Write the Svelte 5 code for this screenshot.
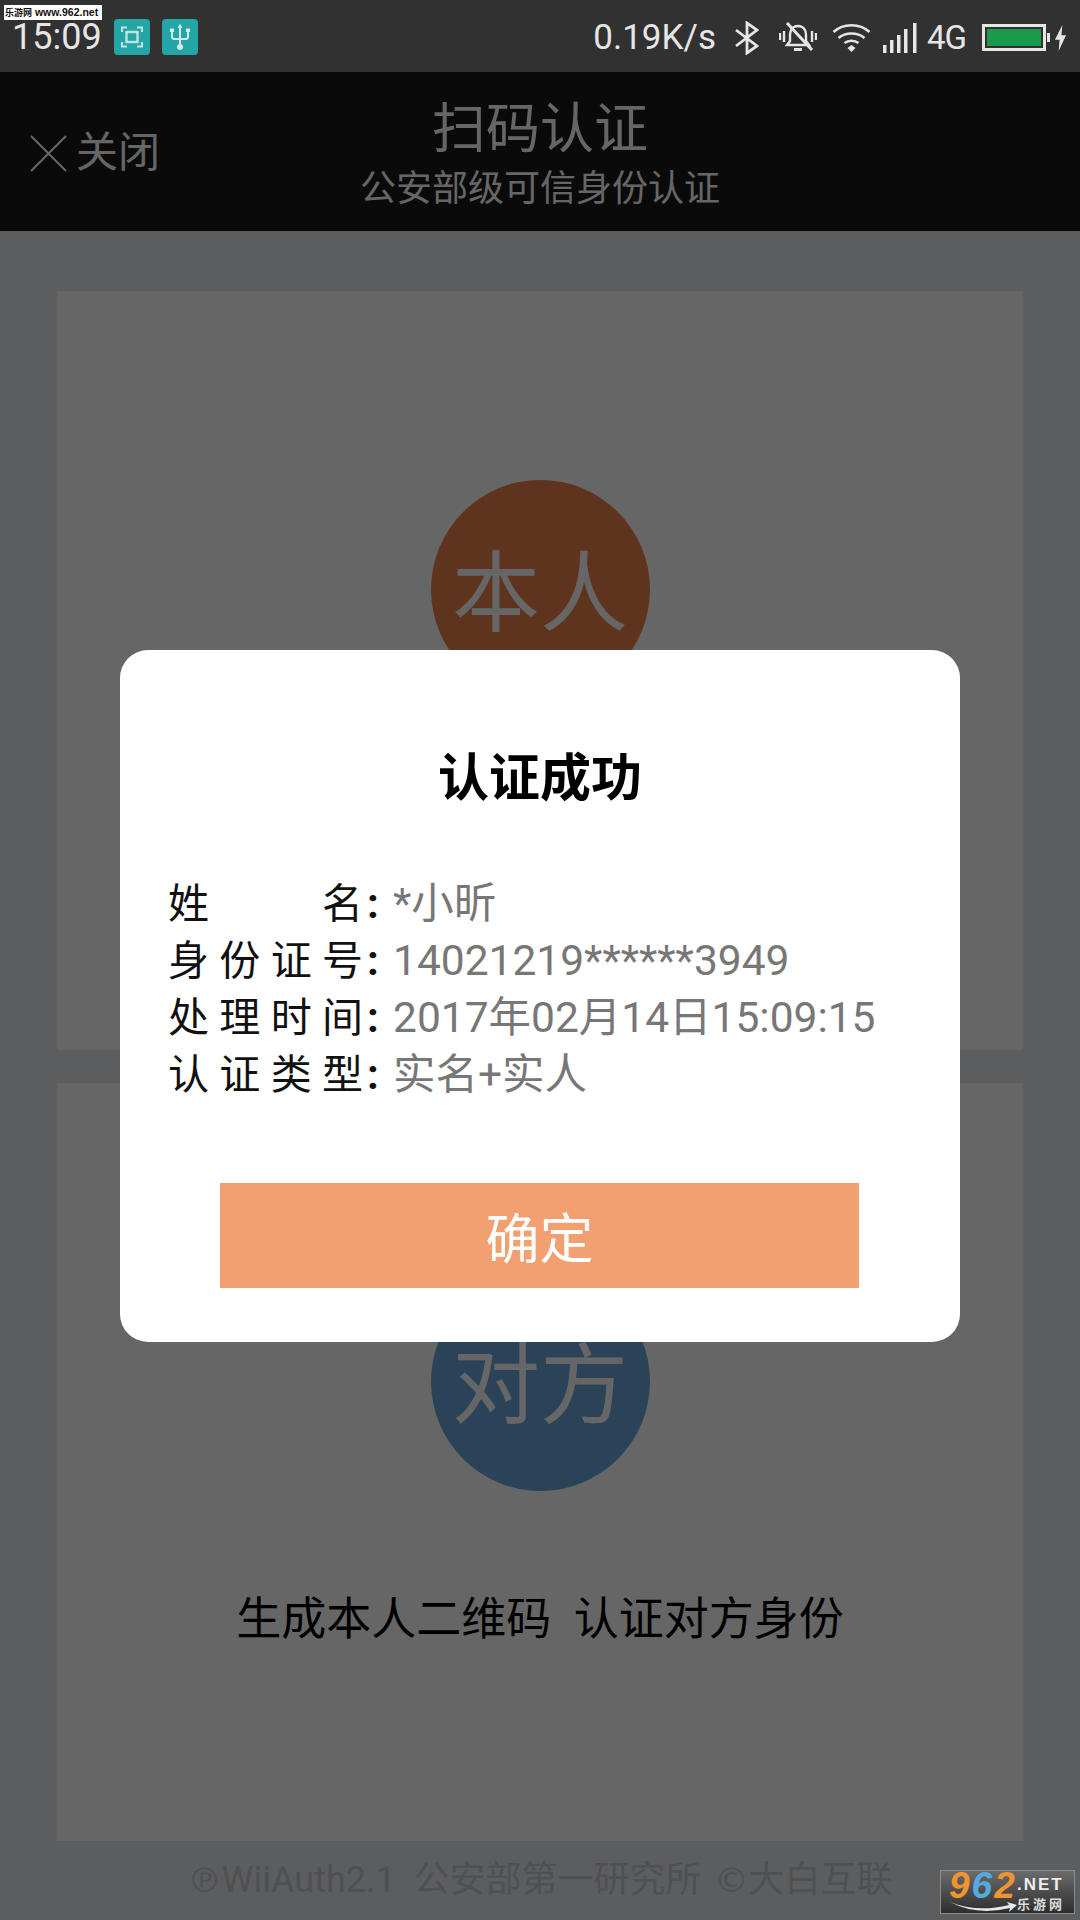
<script lang="ts">
  const details = [
    { label: ['姓', '名'], value: '*小昕' },
    { label: ['身', '份', '证', '号'], value: '14021219******3949' },
    { label: ['处', '理', '时', '间'], value: '2017年02月14日15:09:15' },
    { label: ['认', '证', '类', '型'], value: '实名+实人' }
  ];
</script>

<div class="phone">
  <div class="statusbar">
    <div class="status-left">
      <span class="clock">15:09</span>
      <span class="chip">
        <svg viewBox="0 0 36 36" width="36" height="36" fill="none" stroke="#bfe5e3" stroke-width="2">
          <path d="M8 13V8.500H13M23 8.500H28V13M8 23V27.500H13M23 27.500H28V23" />
          <rect x="12.500" y="13" width="11" height="10" stroke-width="2.400" />
        </svg>
      </span>
      <span class="chip">
        <svg viewBox="0 0 36 36" width="36" height="36" fill="none" stroke="#cfeae8" stroke-width="2">
          <path d="M18 8V28M10 12V17.500Q10 20 12.500 20H23.500Q26 20 26 17.500V12" />
          <path d="M18 4.500L15.500 9H20.500Z" fill="#cfeae8" stroke="none" />
          <circle cx="18" cy="28" r="3" fill="#cfeae8" stroke="none" />
          <rect x="8" y="9.500" width="4" height="3.500" fill="#cfeae8" stroke="none" />
          <rect x="24" y="9.500" width="4" height="3.500" fill="#cfeae8" stroke="none" />
        </svg>
      </span>
    </div>
    <div class="status-right">
      <span class="speed">0.19K/s</span>
      <svg class="bt" viewBox="0 0 24 34" width="24" height="34" fill="none" stroke="#e6e6e6" stroke-width="2.800">
        <path d="M1 9L22 25L12 32V2L22 9L1 25" />
      </svg>
      <svg class="mute" viewBox="0 0 38 32" width="38" height="32" fill="none" stroke="#e6e6e6" stroke-width="2.400">
        <path d="M19 4C13 4 11 9 11 13V19L8 23H30L27 19V13C27 9 25 4 19 4Z" />
        <path d="M15 27.500H23" stroke-width="3" />
        <path d="M1 11V18M5 9V20M33 9V20M37 11V18" />
        <path d="M8 1L33 28" stroke-width="3" />
      </svg>
      <svg class="wifi" viewBox="0 0 38 30" width="39" height="30" fill="none" stroke="#e6e6e6" stroke-width="2.600">
        <path d="M1 9C11 0 27 0 37 9M6 15C13 9 25 9 32 15M12 20C16 17 22 17 26 20" />
        <path d="M19 29L15 25L19 22L23 25Z" fill="#e6e6e6" stroke="none" />
      </svg>
      <svg class="signal" viewBox="0 0 34 30" width="34" height="30" fill="#e6e6e6">
        <rect x="0" y="22" width="3.500" height="8" />
        <rect x="7" y="17" width="3.500" height="13" />
        <rect x="14" y="12" width="3.500" height="18" />
        <rect x="21" y="6" width="3.500" height="24" />
        <rect x="30" y="0" width="3.500" height="30" />
      </svg>
      <span class="net">4G</span>
      <span class="battery"><span class="level"></span></span>
      <span class="nub"></span>
      <svg class="bolt" viewBox="0 0 14 28" width="13" height="28" fill="#e6e6e6">
        <path d="M9 0L1 16H6L5 28L13 11H8Z" />
      </svg>
    </div>
    <div class="site-tag"><span class="site-cn">乐游网</span> www.962.net</div>
  </div>

  <div class="content">
    <header class="topbar">
      <div class="close">
        <svg viewBox="0 0 36 36" width="37" height="37" fill="none" stroke="#fff" stroke-width="2">
          <path d="M1 1L35 35M35 1L1 35" />
        </svg>
        <span>关闭</span>
      </div>
      <div class="titles">
        <div class="title">扫码认证</div>
        <div class="subtitle">公安部级可信身份认证</div>
      </div>
    </header>

    <main class="cards">
      <section class="card">
        <div class="circle orange">本人</div>
      </section>
      <section class="card">
        <div class="circle blue">对方</div>
        <div class="card-text">生成本人二维码&nbsp;&nbsp;认证对方身份</div>
      </section>
    </main>

    <footer class="foot"><span class="sym">℗</span>WiiAuth2.1&nbsp;&nbsp;公安部第一研究所&nbsp;<span class="sym copy">©</span>大白互联</footer>

    <div class="scrim"></div>

    <div class="dialog">
      <h2>认证成功</h2>
      <div class="rows">
        {#each details as row}
          <div class="row">
            <span class="label">
              {#each row.label as ch}<span>{ch}</span>{/each}
            </span>
            <span class="colon">:</span>
            <span class="value">{row.value}</span>
          </div>
        {/each}
      </div>
      <button class="ok">确定</button>
    </div>

    <div class="badge">
      <div class="badge-logo">
        <div class="digits"><span class="n9">9</span><span class="n6">6</span><span class="n2">2</span></div>
        <svg viewBox="0 0 68 12" width="68" height="12">
          <path d="M1 1Q28 12 60 4L58 1L68 4L60 11L61 7Q28 15 1 1Z" fill="#e8e8e8" />
        </svg>
      </div>
      <div class="badge-side">
        <span class="dotnet">.NET</span>
        <span class="site">乐游网</span>
      </div>
    </div>
  </div>
</div>

<style>
  :global(body) {
    margin: 0;
    background: #e7e8ee;
  }

  .phone {
    width: 1080px;
    height: 1920px;
    display: flex;
    flex-direction: column;
    overflow: hidden;
    font-family: Roboto, "Noto Sans CJK SC", sans-serif;
  }

  .statusbar {
    position: relative;
    height: 72px;
    flex: none;
    background: #313131;
    display: flex;
    align-items: center;
    justify-content: space-between;
    color: #e6e6e6;
  }

  .status-left {
    display: flex;
    align-items: center;
    padding: 2px 0 0 12px;
  }

  .clock {
    font-size: 36px;
    width: 102px;
  }

  .chip {
    width: 36px;
    height: 36px;
    border-radius: 4px;
    background: #25a6a6;
    margin-right: 12px;
    display: flex;
  }

  .status-right {
    display: flex;
    align-items: center;
    padding: 3px 13px 0 0;
  }

  .speed {
    font-size: 35px;
    margin-right: 19px;
  }

  .mute {
    margin-left: 20px;
  }

  .wifi {
    margin-left: 15px;
  }

  .signal {
    margin-left: 12px;
  }

  .net {
    font-size: 33px;
    margin-left: 10px;
    letter-spacing: -1px;
  }

  .battery {
    width: 64px;
    height: 27px;
    margin-left: 16px;
    border: 3px solid #e6e6e6;
    padding: 2px;
    box-sizing: border-box;
    display: flex;
  }

  .level {
    flex: 1;
    background: #1c9a4b;
  }

  .nub {
    width: 3px;
    height: 9px;
    background: #e6e6e6;
    margin-left: 1px;
  }

  .bolt {
    margin-left: 4px;
  }

  .site-tag {
    position: absolute;
    left: 4px;
    top: 5px;
    width: 98px;
    height: 15px;
    padding-left: 1px;
    box-sizing: border-box;
    background: #fff;
    color: #111;
    font: 700 10.500px/15px "Liberation Sans", "Noto Sans CJK SC", sans-serif;
    white-space: nowrap;
  }

  .site-cn {
    font-size: 9px;
  }

  .content {
    position: relative;
    flex: 1;
    display: flex;
    flex-direction: column;
    min-height: 0;
  }

  .topbar {
    height: 159px;
    flex: none;
    background: #191919;
    color: #fff;
    display: flex;
    align-items: center;
    justify-content: center;
    position: relative;
  }

  .close {
    position: absolute;
    left: 30px;
    top: 58px;
    display: flex;
    align-items: center;
    gap: 9px;
    font-size: 42px;
    line-height: 46px;
  }

  .titles {
    text-align: center;
    margin-top: 10px;
  }

  .title {
    font-size: 54px;
    line-height: 64px;
  }

  .subtitle {
    font-size: 36px;
    line-height: 51px;
    margin-top: 2px;
  }

  .cards {
    flex: none;
    height: 1610px;
    padding: 60px 57px 0;
    box-sizing: border-box;
    display: flex;
    flex-direction: column;
    gap: 33px;
  }

  .card {
    flex: 1;
    background: #fff;
    display: flex;
    flex-direction: column;
    align-items: center;
    padding-top: 189px;
    box-sizing: border-box;
  }

  .circle {
    width: 219px;
    height: 219px;
    flex: none;
    box-sizing: border-box;
    padding-bottom: 8px;
    border-radius: 50%;
    color: #fff;
    font-size: 88px;
    display: flex;
    align-items: center;
    justify-content: center;
  }

  .orange {
    background: #ee824b;
  }

  .blue {
    background: #6ca8dc;
  }

  .card-text {
    margin-top: 98px;
    font-size: 45px;
    line-height: 62px;
    color: #000;
  }

  .foot {
    text-align: center;
    margin-top: 16px;
    font-size: 36px;
    line-height: 46px;
    color: #c6c7ca;
  }

  .sym {
    font-family: "DejaVu Sans", sans-serif;
    font-size: 34px;
  }

  .copy {
    margin-left: 4px;
  }

  .scrim {
    position: absolute;
    inset: 0;
    background: rgba(0, 0, 0, 0.6);
  }

  .dialog {
    position: absolute;
    left: 120px;
    top: 578px;
    width: 840px;
    height: 692px;
    box-sizing: border-box;
    background: #fff;
    border-radius: 28px;
    padding: 97px 0 0 48px;
  }

  h2 {
    margin: 0 48px 0 0;
    text-align: center;
    font-size: 51px;
    line-height: 64px;
    font-weight: 700;
    color: #000;
  }

  .rows {
    margin-top: 64px;
    display: flex;
    flex-direction: column;
  }

  .row {
    display: flex;
    align-items: baseline;
    height: 57px;
    line-height: 57px;
  }

  .label {
    width: 195px;
    display: flex;
    justify-content: space-between;
    font-size: 41px;
    color: #111;
  }

  .colon {
    width: 30px;
    font-size: 42px;
    font-weight: 700;
    color: #111;
    padding-left: 4px;
    box-sizing: border-box;
  }

  .value {
    font-size: 42.500px;
    color: #777;
    white-space: nowrap;
  }

  .ok {
    display: block;
    margin: 80px 0 0 52px;
    width: 639px;
    height: 105px;
    border: none;
    border-radius: 0;
    background: #f29f72;
    color: #fff;
    font: inherit;
    font-size: 54px;
  }

  .badge {
    position: absolute;
    left: 940px;
    top: 1798px;
    width: 135px;
    height: 44px;
    box-sizing: border-box;
    border: 1px solid #8c8c8c;
    background: linear-gradient(#6b6b6b, #2e2e2e);
    display: flex;
    padding-left: 8px;
  }

  .badge-logo {
    display: flex;
    flex-direction: column;
  }

  .digits {
    height: 30px;
    font: italic 700 37px/30px "Liberation Sans", sans-serif;
    letter-spacing: 2px;
    white-space: nowrap;
  }

  .n9, .n2 {
    color: #ef9430;
  }

  .n6 {
    color: #55abe0;
  }

  .badge-side {
    display: flex;
    flex-direction: column;
    padding-top: 5px;
    white-space: nowrap;
  }

  .dotnet {
    color: #eee;
    font: 700 17px/17px "Liberation Sans", sans-serif;
    letter-spacing: 2px;
  }

  .site {
    margin-top: 4px;
    color: #ddd;
    font-size: 13px;
    line-height: 15px;
    font-weight: 700;
    letter-spacing: 3px;
  }
</style>
